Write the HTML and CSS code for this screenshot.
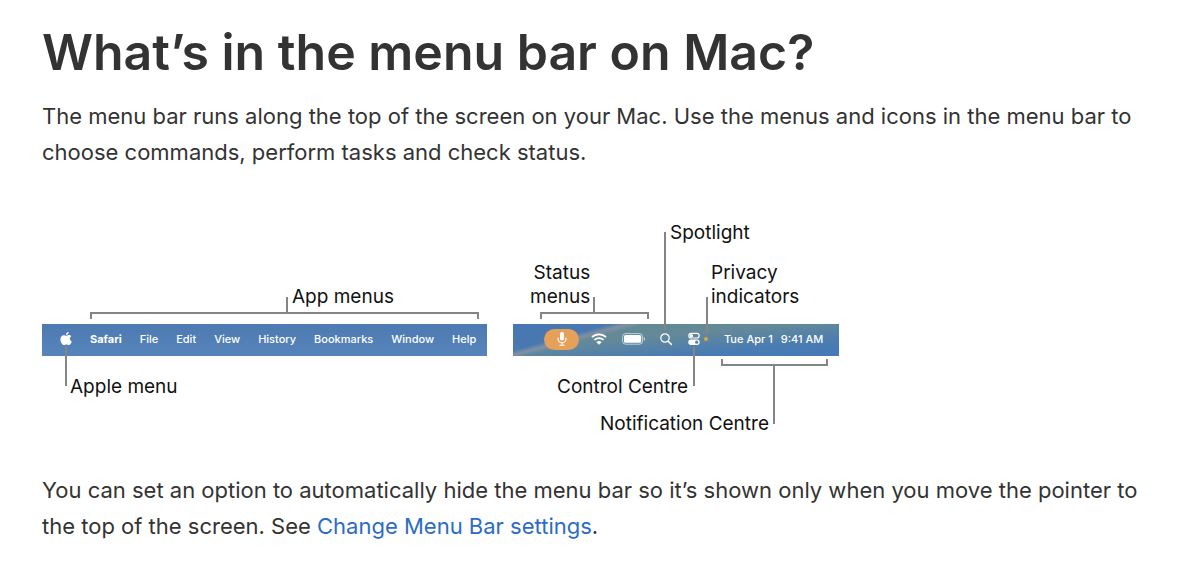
FILE: index.html
```html
<!DOCTYPE html>
<html lang="en-GB">
<head>
<meta charset="utf-8">
<title>What’s in the menu bar on Mac?</title>
<link rel="stylesheet" href="styles.css">
</head>
<body>
<main class="article">
  <h1 class="title">What’s in the menu bar on Mac?</h1>
  <p class="copy">The menu bar runs along the top of the screen on your Mac. Use the menus and icons in the menu bar to choose commands, perform tasks and check status.</p>

  <figure class="diagram">
    <div class="bars">
      <div class="bar bar-apps">
        <svg class="apple" width="12" height="16" viewBox="1.2 0 12 16" aria-label="Apple"><path fill="#fff" d="M9.900 1c.1 1.500-1.200 2.900-2.700 2.900C7 2.500 8.300 1.100 9.900 1zM7.300 4.800c.6 0 1.500-.8 2.700-.8 1 0 1.900.5 2.500 1.300-2.100 1.300-1.800 4.200.5 5.100-.5 1.500-1.700 3.700-3 3.700-.9 0-1.300-.5-2.400-.5s-1.600.5-2.400.5C3.500 14.100 1.600 11.200 1.600 8.500 1.600 5.700 3.300 4.200 5 4.200c1 0 1.700.6 2.300.6z"/></svg>
        <span class="app-name">Safari</span>
        <span>File</span>
        <span>Edit</span>
        <span>View</span>
        <span>History</span>
        <span>Bookmarks</span>
        <span>Window</span>
        <span>Help</span>
      </div>
      <div class="bar bar-status">
        <span class="mic">
          <svg width="12" height="16" viewBox="0 0 12 16"><rect x="4" y="1" width="4" height="8.500" rx="2" fill="#fff"/><path d="M2 7v.8a4 4 0 0 0 8 0V7M6 12v2.300M3.800 14.300h4.400" fill="none" stroke="#fff" stroke-width="1.100" stroke-linecap="round"/></svg>
        </span>
        <svg class="wifi" width="16" height="14" viewBox="0 0 16 14"><g fill="none" stroke="#fff" stroke-width="1.800"><path d="M1 5.200a10 10 0 0 1 14 0M3.400 7.900a6.600 6.600 0 0 1 9.200 0"/></g><path fill="#fff" d="M8 12.800 5.400 10.200a3.700 3.700 0 0 1 5.200 0z"/></svg>
        <svg class="battery" width="24" height="12" viewBox="0 0 24 12"><rect x=".6" y=".6" width="20" height="10.600" rx="3" fill="none" stroke="#fff" stroke-opacity=".6"/><rect x="2" y="2" width="17.200" height="7.800" rx="1.600" fill="#fff"/><path d="M21.800 4v4c1.500-.6 1.500-3.400 0-4z" fill="#fff" fill-opacity=".7"/></svg>
        <svg class="search" width="14" height="14" viewBox="0 0 14 14"><circle cx="6" cy="6" r="4.200" fill="none" stroke="#fff" stroke-width="1.200"/><path d="M9.200 9.200l3.200 3.200" stroke="#fff" stroke-width="1.500" stroke-linecap="round"/></svg>
        <svg class="control" width="12" height="14" viewBox="0 0 12 14"><rect x=".8" y="1.400" width="10.400" height="4.600" rx="2.300" fill="none" stroke="#fff" stroke-width="1.100"/><circle cx="3.400" cy="3.700" r="1.700" fill="#fff"/><rect x=".3" y="7.500" width="11.400" height="5.400" rx="2.700" fill="#fff"/><circle cx="8.700" cy="10.200" r="1.600" fill="#5683ad"/></svg>
        <span class="dot"></span>
        <span class="clock"><span>Tue Apr 1</span><span>9:41 AM</span></span>
      </div>
    </div>
    <svg class="leaders" width="800" height="220" viewBox="42 216 800 220" aria-hidden="true">
      <g fill="none" stroke="#858585" stroke-width="2">
        <path d="M91 319v-6h387v6M287 313v-16M66 347v39"/>
        <path d="M541 319v-6h107v6M594 313v-16M665 232v98M707 297v37M694 347v39"/>
        <path d="M722 359v6h105v-6M774 365v59"/>
      </g>
    </svg>
    <span class="label label-app">App menus</span>
    <span class="label label-apple">Apple menu</span>
    <span class="label label-status">Status<br>menus</span>
    <span class="label label-spotlight">Spotlight</span>
    <span class="label label-privacy">Privacy<br>indicators</span>
    <span class="label label-control">Control Centre</span>
    <span class="label label-notification">Notification Centre</span>
  </figure>

  <p class="copy">You can set an option to automatically hide the menu bar so it’s shown only when you move the pointer to the top of the screen. See <a class="link" href="#settings">Change Menu Bar settings</a>.</p>
</main>
</body>
</html>
```
FILE: styles.css
```css
body {
  margin: 0;
  background: #fff;
  color: #333;
  font-family: Inter, "Liberation Sans", sans-serif;
}

.article {
  padding: 20px 32px 24px 42px;
}

.title {
  margin: 0;
  font-size: 50px;
  line-height: 64px;
  font-weight: 600;
}

.copy {
  margin: 14px 0 0;
  font-size: 22px;
  line-height: 36px;
}

.link {
  color: #2b6cc4;
  text-decoration: none;
}

.diagram {
  position: relative;
  margin: 46px 0 0;
  height: 242px;
  color: #111;
}

.bars {
  display: flex;
  gap: 26px;
  padding-top: 108px;
}

.bar {
  display: flex;
  flex-shrink: 0;
  align-items: center;
  box-sizing: border-box;
  height: 32px;
  color: #fff;
  font-size: 11px;
  font-weight: 500;
  line-height: 16px;
  white-space: nowrap;
}

.bar > * {
  flex-shrink: 0;
}

.bar-apps {
  width: 445px;
  gap: 18px;
  padding: 0 10px 2px 18px;
  background: linear-gradient(#4c7ab1, #5785bb);
}

.app-name {
  font-weight: 700;
}

.bar-status {
  width: 326px;
  padding: 0 14px 2px 31px;
  background:
    linear-gradient(165deg, #4777b2 0, #4a79b0 22%, #8090a2 26%, transparent 30%),
    linear-gradient(175deg, #628992 0, #648998 40%, #4a7cb3 75%, #4678b9 100%);
}

.mic {
  display: flex;
  align-items: center;
  justify-content: center;
  width: 35px;
  height: 21px;
  border-radius: 11px;
  background: #e5a05a;
}

.wifi {
  margin-left: 12px;
}

.battery {
  margin-left: 15px;
}

.search {
  margin-left: 13px;
}

.control {
  margin-left: 15px;
}

.dot {
  width: 4px;
  height: 4px;
  margin-left: 4px;
  border-radius: 50%;
  background: #e9a13b;
}

.clock {
  display: flex;
  gap: 8px;
  margin-left: 16px;
}

.leaders {
  position: absolute;
  left: 0;
  top: 0;
}

.label {
  position: absolute;
  font-size: 19px;
  line-height: 24px;
  white-space: nowrap;
}

.label-app { left: 250px; top: 69px; }
.label-apple { left: 28px; top: 159px; }
.label-status { left: 488px; top: 45px; text-align: right; }
.label-spotlight { left: 628px; top: 5px; }
.label-privacy { left: 669px; top: 45px; }
.label-control { left: 515px; top: 159px; }
.label-notification { left: 558px; top: 196px; }
```
